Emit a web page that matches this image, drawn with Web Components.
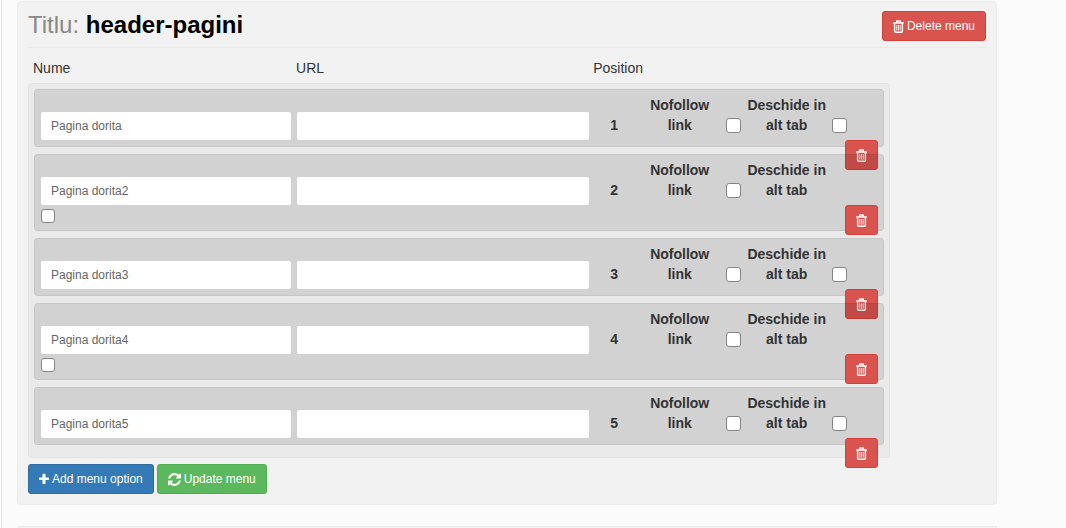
<!DOCTYPE html>
<html lang="ro">
<head>
<meta charset="utf-8">
<meta name="viewport" content="width=device-width, initial-scale=1">
<title>Meniuri</title>
<style>
  body {
    margin: 0;
    background: #fff;
    color: #333;
    font: 14px/20px "Liberation Sans", Arial, sans-serif;
  }
</style>
</head>
<body>
<menu-page>
  <menu-well>
    <menu-header name="header-pagini"></menu-header>
    <menu-options>
      <menu-option name="Pagina dorita" position="1"></menu-option>
      <menu-option name="Pagina dorita2" position="2" wrapped></menu-option>
      <menu-option name="Pagina dorita3" position="3"></menu-option>
      <menu-option name="Pagina dorita4" position="4" wrapped></menu-option>
      <menu-option name="Pagina dorita5" position="5"></menu-option>
    </menu-options>
    <menu-actions>
      <action-button kind="primary" icon="plus">Add menu option</action-button>
      <action-button kind="success" icon="refresh">Update menu</action-button>
    </menu-actions>
  </menu-well>
  <menu-well next></menu-well>
</menu-page>

<script>
  const ICONS = {
    trash: '<svg width="11" height="13" viewBox="0 0 11 13" fill="none" stroke="currentColor" aria-hidden="true"><path d="M.2 3H10.800M1.600 3V11.200Q1.600 12.300 2.600 12.300H8.400Q9.400 12.300 9.400 11.200V3M3.300 2.800L3.900 1H7.100L7.700 2.800" stroke-width="1.4"/><path d="M3.800 5V10.600M5.500 5V10.600M7.200 5V10.600" stroke-width=".9"/></svg>',
    plus: '<svg width="10" height="12" viewBox="0 0 10 12" fill="currentColor" aria-hidden="true"><path d="M4 .7h2q.5 0 .5.5v3.300h3q.5 0 .5.5v1.600q0 .5-.5.5h-3v3.300q0 .5-.5.5h-2q-.5 0-.5-.5v-3.300h-3Q0 7.100 0 6.600V5q0-.5.5-.5h3v-3.300Q3.500.7 4 .7z"/></svg>',
    refresh: '<svg width="13" height="13" viewBox="128 128 1536 1536" fill="currentColor" aria-hidden="true"><path d="M1639 1056q0 5-1 7-64 268-268 434.500t-478 166.500q-146 0-282.500-55t-243.500-157l-129 129q-19 19-45 19t-45-19-19-45v-448q0-26 19-45t45-19h448q26 0 45 19t19 45-19 45l-137 137q71 66 161 102t187 36q134 0 250-65t186-179q11-17 53-117 8-23 30-23h192q13 0 22.500 9.500t9.500 22.500zm25-800v448q0 26-19 45t-45 19h-448q-26 0-45-19t-19-45 19-45l138-138q-148-137-349-137-134 0-250 65t-186 179q-11 17-53 117-8 23-30 23h-199q-13 0-22.500-9.500t-9.500-22.500v-7q65-268 270-434.500t480-166.500q146 0 284 55.500t245 156.500l130-129q19-19 45-19t45 19 19 45z"/></svg>'
  };

  class BaseElement extends HTMLElement {
    connectedCallback() {
      if (this.shadowRoot) return;
      this.attachShadow({ mode: "open" }).innerHTML =
        `<style>*{box-sizing:border-box}${this.styles()}</style>${this.markup()}`;
    }
  }

  customElements.define("menu-page", class extends BaseElement {
    styles() { return `
      :host { display: block; margin-left: 1px; border-left: 1px solid #e3e3e3; background: #fbfbfb; }
      main { display: flex; flex-direction: column; gap: 21px; padding: 1px 69px 0 15px; }`; }
    markup() { return `<main><slot></slot></main>`; }
  });

  customElements.define("menu-well", class extends BaseElement {
    styles() { return `
      :host { display: block; padding: 9px 10px 10px; background: #f2f2f2; border: 1px solid #ebebeb; border-radius: 4px; }
      :host([next]) { padding: 1px 0 0; border-bottom: 0; border-radius: 4px 4px 0 0; }`; }
    markup() { return `<slot></slot>`; }
  });

  customElements.define("action-button", class extends BaseElement {
    styles() { return `
      :host { display: inline-block; }
      button {
        display: flex; align-items: center; justify-content: center; gap: 3px;
        height: 30px; padding: 0 10px; border: 1px solid; border-radius: 3px;
        color: #fff; font: 12px/18px "Liberation Sans", Arial, sans-serif; white-space: nowrap;
      }
      .primary { background: #337ab7; border-color: #2e6da4; }
      .success { background: #5cb85c; border-color: #4cae4c; }
      .danger { background: #d9534f; border-color: #d43f3a; }
      svg { flex: none; display: block; }`; }
    markup() {
      const label = this.getAttribute("label");
      return `<button type="button" class="${this.getAttribute("kind")}"${label ? ` aria-label="${label}"` : ""}>${ICONS[this.getAttribute("icon")]}${label ? "" : "<slot></slot>"}</button>`;
    }
  });

  customElements.define("menu-header", class extends BaseElement {
    styles() { return `
      :host { display: block; }
      header { display: flex; justify-content: space-between; align-items: flex-start; padding-bottom: 6px; border-bottom: 1px solid #e9e9e9; }
      h3 { margin: 0; font-size: 24px; line-height: 28px; font-weight: 400; color: #888; }
      strong { color: #000; }`; }
    markup() { return `<header><h3>Titlu: <strong>${this.getAttribute("name")}</strong></h3>
      <action-button kind="danger" icon="trash">Delete menu</action-button></header>`; }
  });

  customElements.define("menu-options", class extends BaseElement {
    styles() { return `
      :host { display: block; width: 90%; margin-top: 10px; }
      .heads { display: grid; grid-template-columns: 257fr 291fr 292px; gap: 6px; padding: 0 5px; margin-bottom: 5px; }
      .rows { display: flex; flex-direction: column; gap: 7px; padding: 5px 5px 12px; background: #eaeaea; border: 1px solid #e3e3e3; border-radius: 4px; }`; }
    markup() { return `<div class="heads"><span>Nume</span><span>URL</span><span>Position</span></div>
      <div class="rows"><slot></slot></div>`; }
  });

  customElements.define("menu-option", class extends BaseElement {
    styles() { return `
      :host {
        display: grid; position: relative;
        grid-template-columns: minmax(0, 249fr) minmax(0, 291fr) 38px 81px 15px 79px 15px;
        grid-template-rows: 45px; column-gap: 6px;
        padding: 5px 36px 6px 6px;
        background: rgba(0, 0, 0, .1); border: 1px solid rgba(0, 0, 0, .06); border-radius: 4px;
      }
      :host([wrapped]) { grid-template-rows: 45px 19px; }
      .text {
        align-self: end; width: 100%; height: 28px; padding: 0 10px; border: 0; border-radius: 2px;
        background: #fff; color: #666; font: 12px/18px "Liberation Sans", Arial, sans-serif;
      }
      output, label { font-weight: 700; text-align: center; }
      output { margin-top: 20px; }
      .check {
        appearance: none; align-self: end; width: 15px; height: 15px; margin: 0 0 7px;
        background: #fff; border: 1px solid #858585; border-radius: 3px;
      }
      :host([wrapped]) #tab { grid-area: 2 / 1; align-self: start; width: 14px; height: 14px; margin: 4px 0 0; }
      action-button { position: absolute; top: 50px; right: 5px; }`; }
    markup() { return `
      <input class="text" type="text" aria-label="Nume" value="${this.getAttribute("name")}">
      <input class="text" type="text" aria-label="URL">
      <output>${this.getAttribute("position")}</output>
      <label for="nofollow">Nofollow<br>link</label>
      <input class="check" id="nofollow" type="checkbox">
      <label for="tab">Deschide in<br>alt tab</label>
      <input class="check" id="tab" type="checkbox">
      <action-button kind="danger" icon="trash" label="Delete option"></action-button>`; }
  });

  customElements.define("menu-actions", class extends BaseElement {
    styles() { return `:host { display: flex; flex-wrap: wrap; gap: 3px; margin-top: 6px; }`; }
    markup() { return `<slot></slot>`; }
  });
</script>
</body>
</html>
